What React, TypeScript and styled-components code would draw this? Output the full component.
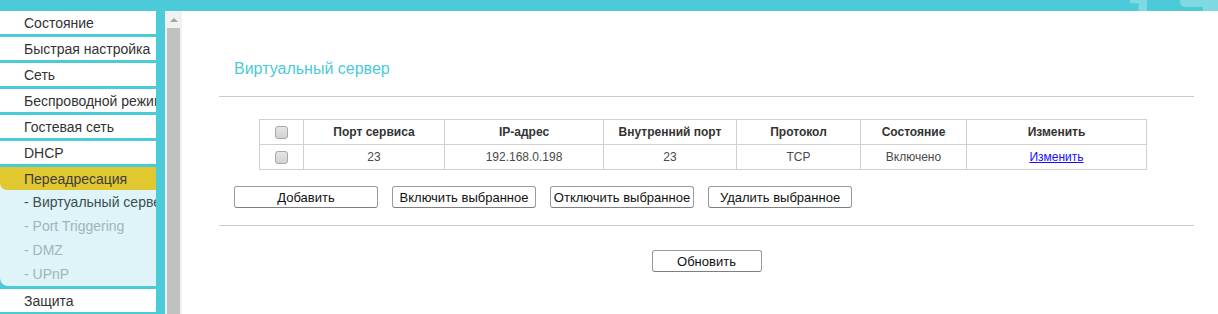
import React from 'react';
import styled, { createGlobalStyle } from 'styled-components';

const GlobalStyle = createGlobalStyle`
  html, body {
    margin: 0;
    padding: 0;
    background: #fff;
    overflow: hidden;
  }
  body {
    font-family: 'Liberation Sans', Arial, sans-serif;
  }
`;

const CYAN = '#4bcad7';

interface MenuEntry {
  label: string;
}

const mainItems: MenuEntry[] = [
  { label: 'Состояние' },
  { label: 'Быстрая настройка' },
  { label: 'Сеть' },
  { label: 'Беспроводной режим' },
  { label: 'Гостевая сеть' },
  { label: 'DHCP' },
];

const subItems = [
  { label: '- Виртуальный сервер', active: true },
  { label: '- Port Triggering', active: false },
  { label: '- DMZ', active: false },
  { label: '- UPnP', active: false },
];

const columns = [
  { title: '', width: 44 },
  { title: 'Порт сервиса', width: 141 },
  { title: 'IP-адрес', width: 159 },
  { title: 'Внутренний порт', width: 133 },
  { title: 'Протокол', width: 124 },
  { title: 'Состояние', width: 106 },
  { title: 'Изменить', width: 180 },
];

const actions = ['Добавить', 'Включить выбранное', 'Отключить выбранное', 'Удалить выбранное'];

const App: React.FC = () => {
  return (
    <Page>
      <GlobalStyle />
      <TopBar>
        <Deco1 aria-hidden />
        <Deco2 aria-hidden />
      </TopBar>
      <Body>
        <Sidebar>
          {mainItems.map((m) => (
            <MenuItem key={m.label}>{m.label}</MenuItem>
          ))}
          <Group>
            <GroupHeader>Переадресация</GroupHeader>
            {subItems.map((s) => (
              <SubItem key={s.label} $active={s.active}>
                {s.label}
              </SubItem>
            ))}
          </Group>
          <MenuItem>Защита</MenuItem>
        </Sidebar>
        <Scrollbar>
          <ScrollArrow />
          <ScrollThumb />
        </Scrollbar>
        <Main>
          <Title>Виртуальный сервер</Title>
          <Rule />
          <Table>
            <colgroup>
              {columns.map((c, i) => (
                <col key={i} style={{ width: c.width }} />
              ))}
            </colgroup>
            <thead>
              <tr>
                {columns.map((c, i) => (
                  <Th key={i}>{i === 0 ? <Check /> : c.title}</Th>
                ))}
              </tr>
            </thead>
            <tbody>
              <tr>
                <Td>
                  <Check />
                </Td>
                <Td>23</Td>
                <Td>192.168.0.198</Td>
                <Td>23</Td>
                <Td>TCP</Td>
                <Td>Включено</Td>
                <Td>
                  <EditLink href="#">Изменить</EditLink>
                </Td>
              </tr>
            </tbody>
          </Table>
          <Actions>
            {actions.map((a) => (
              <Btn key={a}>{a}</Btn>
            ))}
          </Actions>
          <Rule $top={17} />
          <Footer>
            <Btn $width={110}>Обновить</Btn>
          </Footer>
        </Main>
      </Body>
    </Page>
  );
};

export default App;

const Page = styled.div`
  width: 1218px;
  height: 314px;
  overflow: hidden;
  display: flex;
  flex-direction: column;
`;

const TopBar = styled.div`
  position: relative;
  height: 11px;
  background: ${CYAN};
  flex-shrink: 0;
`;

const Deco1 = styled.span`
  position: absolute;
  left: 1130px;
  top: 0;
  width: 17px;
  height: 11px;
  background: #7fd9e2;
  clip-path: polygon(0 0, 100% 0, 100% 100%, 50% 100%, 50% 30%, 0 30%);
`;

const Deco2 = styled.span`
  position: absolute;
  left: 1180px;
  top: 0;
  width: 38px;
  height: 7px;
  background: #7fd9e2;
  border-bottom-left-radius: 5px;

  &::after {
    content: '';
    position: absolute;
    right: 0;
    top: 0;
    width: 15px;
    height: 11px;
    background: #7fd9e2;
  }
`;

const Body = styled.div`
  display: flex;
  flex: 1;
  min-height: 0;
`;

const Sidebar = styled.nav`
  width: 165px;
  padding-right: 9px;
  box-sizing: border-box;
  background: ${CYAN};
  flex-shrink: 0;
  display: flex;
  flex-direction: column;
  gap: 3px;
`;

const MenuItem = styled.div`
  height: 23px;
  line-height: 24px;
  background: #fff;
  padding-left: 24px;
  font-size: 14px;
  color: #333;
  white-space: nowrap;
  overflow: hidden;
`;

const Group = styled.div`
  background: #dff4f8;
  border-bottom-left-radius: 8px;
  overflow: hidden;
`;

const GroupHeader = styled.div`
  height: 23px;
  line-height: 24px;
  background: #e1c831;
  border-bottom-left-radius: 7px;
  padding-left: 24px;
  font-size: 14px;
  color: #3d3d3d;
  white-space: nowrap;
`;

const SubItem = styled.div<{ $active: boolean }>`
  height: 24px;
  line-height: 25px;
  padding-left: 24px;
  font-size: 14px;
  color: ${(p) => (p.$active ? '#3b4f52' : '#9db6ba')};
  white-space: nowrap;
  overflow: hidden;
`;

const Scrollbar = styled.div`
  width: 17px;
  flex-shrink: 0;
  background: #f1f1f1;
  display: flex;
  flex-direction: column;
  align-items: center;
`;

const ScrollArrow = styled.div`
  height: 17px;
  width: 100%;
  display: flex;
  align-items: center;
  justify-content: center;

  &::before {
    content: '';
    border-left: 4px solid transparent;
    border-right: 4px solid transparent;
    border-bottom: 4px solid #a3a3a3;
  }
`;

const ScrollThumb = styled.div`
  width: 13px;
  flex: 1;
  background: #c1c1c1;
`;

const Main = styled.main`
  flex: 1;
  padding: 0 24px 0 37px;
  display: flex;
  flex-direction: column;
`;

const Title = styled.h2`
  margin: 48px 0 0 15px;
  font-size: 16px;
  line-height: 20px;
  font-weight: normal;
  color: ${CYAN};
`;

const Rule = styled.hr<{ $top?: number }>`
  margin: ${(p) => p.$top ?? 17}px 0 0;
  border: 0;
  border-top: 1px solid #cbcbcb;
  height: 0;
  width: 100%;
`;

const Table = styled.table`
  margin: 22px 0 0 40px;
  width: 887px;
  border-collapse: collapse;
  table-layout: fixed;
  font-size: 12px;
`;

const Th = styled.th`
  height: 24px;
  padding: 0;
  border: 1px solid #d0d0d0;
  font-weight: bold;
  color: #333;
  text-align: center;
  vertical-align: middle;
`;

const Td = styled.td`
  height: 24px;
  padding: 0;
  border: 1px solid #d0d0d0;
  color: #4a4a4a;
  text-align: center;
  vertical-align: middle;
`;

const Check = styled.span`
  display: inline-block;
  width: 11px;
  height: 11px;
  border: 1px solid #a8a8a8;
  border-radius: 3px;
  background: linear-gradient(#e6e6e6, #d2d2d2);
  vertical-align: middle;
`;

const EditLink = styled.a`
  color: #1a0dff;
  text-decoration: underline;
`;

const Actions = styled.div`
  display: flex;
  gap: 14px;
  margin: 16px 0 0 15px;
`;

const Btn = styled.button<{ $width?: number }>`
  width: ${(p) => p.$width ?? 144}px;
  height: 22px;
  padding: 0;
  background: #fff;
  border: 1px solid #9a9a9a;
  border-bottom-color: #7f7f7f;
  border-radius: 3px;
  font-family: 'Liberation Sans', Arial, sans-serif;
  font-size: 13px;
  color: #111;
  white-space: nowrap;
`;

const Footer = styled.div`
  display: flex;
  justify-content: center;
  margin-top: 24px;
`;
